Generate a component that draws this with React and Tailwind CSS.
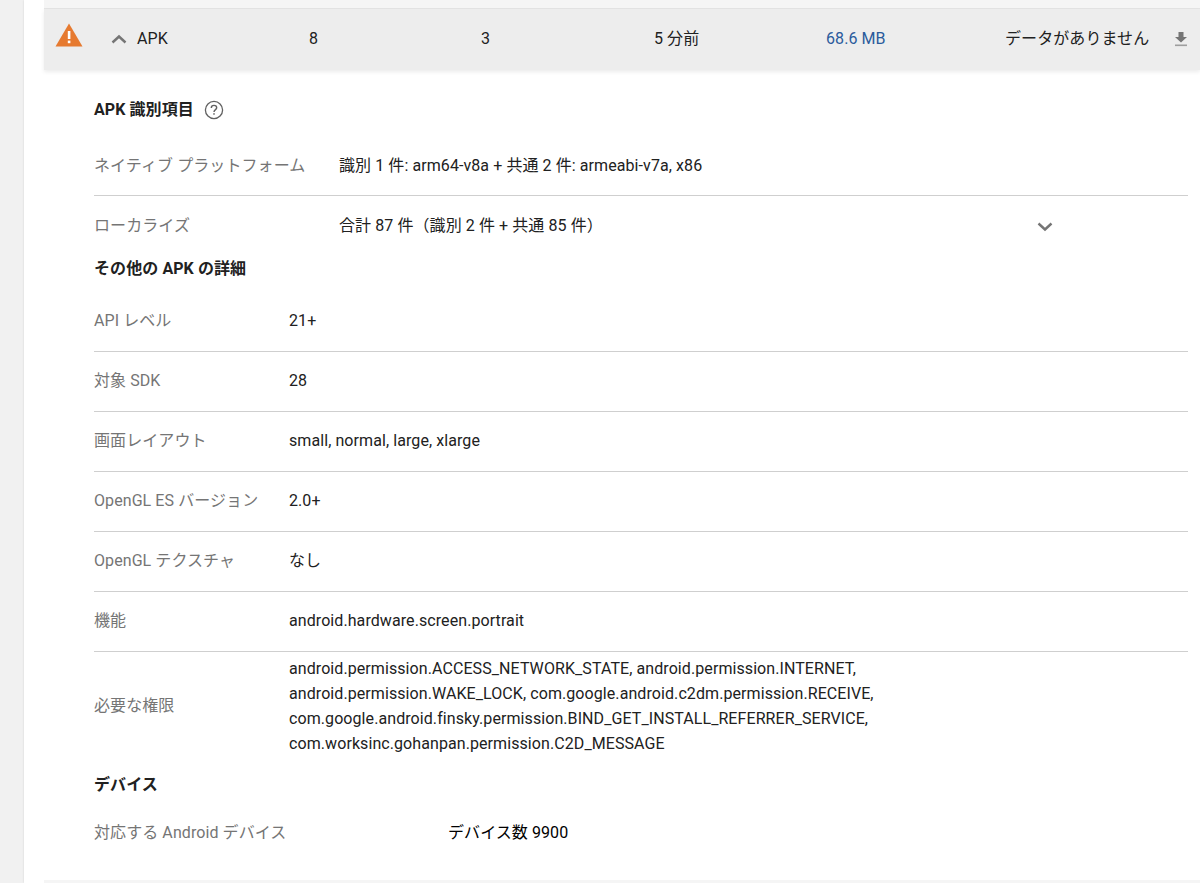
const font = { fontFamily: '"Roboto", "Noto Sans CJK JP", sans-serif' };

const identifiers = [
  { label: "ネイティブ プラットフォーム", value: "識別 1 件: arm64-v8a + 共通 2 件: armeabi-v7a, x86" },
  { label: "ローカライズ", value: "合計 87 件（識別 2 件 + 共通 85 件）", more: true },
];

const details = [
  { label: "API レベル", value: "21+" },
  { label: "対象 SDK", value: "28" },
  { label: "画面レイアウト", value: "small, normal, large, xlarge" },
  { label: "OpenGL ES バージョン", value: "2.0+" },
  { label: "OpenGL テクスチャ", value: "なし" },
  { label: "機能", value: "android.hardware.screen.portrait" },
];

const permissions = [
  "android.permission.ACCESS_NETWORK_STATE, android.permission.INTERNET,",
  "android.permission.WAKE_LOCK, com.google.android.c2dm.permission.RECEIVE,",
  "com.google.android.finsky.permission.BIND_GET_INSTALL_REFERRER_SERVICE,",
  "com.worksinc.gohanpan.permission.C2D_MESSAGE",
];

function WarningIcon() {
  return (
    <svg width="28" height="24" viewBox="0 0 28 24" className="shrink-0">
      <path d="M14 0.5 L27.5 23.5 H0.5 Z" fill="#e67a30" />
      <rect x="12.8" y="8" width="2.6" height="8" fill="#fff" />
      <rect x="12.8" y="17.6" width="2.6" height="2.6" fill="#fff" />
    </svg>
  );
}

function Chevron({ up, className }) {
  return (
    <svg width="16" height="10" viewBox="0 0 16 10" className={className}>
      <path
        d={up ? "M1.5 8.5 L8 2.5 L14.5 8.5" : "M1.5 1.5 L8 7.5 L14.5 1.5"}
        fill="none"
        stroke="#757575"
        strokeWidth="2.4"
      />
    </svg>
  );
}

function DownloadIcon() {
  return (
    <svg width="14" height="16" viewBox="0 0 14 16">
      <path d="M4.5 1 H9.5 V6 H13 L7 11.5 L1 6 H4.5 Z" fill="#757575" />
      <rect x="1" y="13.5" width="12" height="1.6" fill="#9e9e9e" />
    </svg>
  );
}

function HelpIcon() {
  return (
    <svg width="20" height="20" viewBox="0 0 20 20">
      <circle cx="10" cy="10" r="8.6" fill="none" stroke="#616161" strokeWidth="1.3" />
      <path
        d="M7.3 8 C7.3 6.4 8.5 5.4 10 5.4 C11.6 5.4 12.7 6.4 12.7 7.8 C12.7 9.6 10 9.8 10 12"
        fill="none"
        stroke="#616161"
        strokeWidth="1.4"
      />
      <rect x="9.25" y="13.2" width="1.5" height="1.5" fill="#616161" />
    </svg>
  );
}

function Row({ label, value, more, labelWidth, className = "" }) {
  return (
    <div className={`flex items-center h-[60px] border-b border-[#cfcfcf] last:border-b-0 ${className}`}>
      <div className={`${labelWidth} shrink-0 text-[#757575]`}>{label}</div>
      <div className="flex-1 text-[#212121]">{value}</div>
      {more && <Chevron className="mr-[135px] mt-[2px]" />}
    </div>
  );
}

export default function App() {
  return (
    <div style={font} className="h-[883px] overflow-hidden bg-[#f1f1f1] pl-6 text-[16px] tracking-[0.08px] text-[#212121]">
      <div className="flex flex-col h-full bg-white pl-5 shadow-[0_0_2px_rgba(0,0,0,0.12)]">
        <div className="h-[9px] bg-[#f5f5f5] border-b border-[#e4e4e4]" />
        <div className="flex items-center h-[61px] shrink-0 bg-[#ededed] pl-[11px] pb-[2px] shadow-[0_2px_4px_rgba(0,0,0,0.08)]">
          <div className="w-[56px] flex -mt-[7px]"><WarningIcon /></div>
          <div className="w-[26px]"><Chevron up /></div>
          <div className="w-[172px]">APK</div>
          <div className="w-[172px]">8</div>
          <div className="w-[173px]">3</div>
          <div className="w-[172px]">5 分前</div>
          <div className="w-[179px] text-[#2a5b9c]">68.6 MB</div>
          <div className="w-[169px] whitespace-nowrap">データがありません</div>
          <DownloadIcon />
        </div>

        <div className="flex-1 pl-[50px] pr-3">
          <div className="flex items-center gap-[10px] h-[20px] mt-[30px] font-bold">
            APK 識別項目 <HelpIcon />
          </div>
          <div className="mt-[16px]">
            {identifiers.map((row) => (
              <Row key={row.label} {...row} labelWidth="w-[245px]" />
            ))}
          </div>

          <div className="font-bold h-[20px] mt-[3px] leading-[20px]">その他の APK の詳細</div>
          <div className="mt-[13px]">
            {details.map((row) => (
              <Row key={row.label} {...row} labelWidth="w-[195px]" className="pb-[2px]" />
            ))}
            <div className="flex items-center pt-[4px]">
              <div className="w-[195px] shrink-0 text-[#757575]">必要な権限</div>
              <div className="leading-[25px]">
                {permissions.map((line) => (
                  <div key={line}>{line}</div>
                ))}
              </div>
            </div>
          </div>

          <div className="font-bold h-[20px] mt-[19px] leading-[20px]">デバイス</div>
          <div className="flex items-center h-[20px] mt-[28px]">
            <div className="w-[354px] shrink-0 text-[#757575]">対応する Android デバイス</div>
            <div className="text-black">デバイス数 9900</div>
          </div>
        </div>
        <div className="h-[3px] bg-[#f5f5f5]" />
      </div>
    </div>
  );
}
